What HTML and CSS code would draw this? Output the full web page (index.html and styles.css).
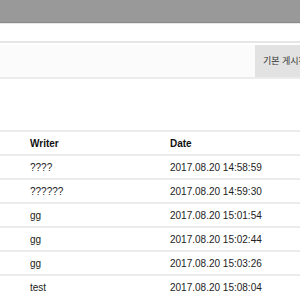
FILE: index.html
```html
<!DOCTYPE html>
<html lang="ko">
<head>
  <meta charset="UTF-8" />
  <title>게시판</title>
  <link rel="stylesheet" href="styles.css">
</head>
<body>
  <div class="topbar"></div>
  <div class="subbar"></div>

  <div class="search">
    <div class="search-input"></div>
    <div class="search-btn">기본 게시판</div>
  </div>

  <table class="board">
    <thead>
      <tr>
        <th class="col-writer">Writer</th>
        <th class="col-date">Date</th>
      </tr>
    </thead>
    <tbody>
      <tr><td>????</td><td>2017.08.20 14:58:59</td></tr>
      <tr><td>??????</td><td>2017.08.20 14:59:30</td></tr>
      <tr><td>gg</td><td>2017.08.20 15:01:54</td></tr>
      <tr><td>gg</td><td>2017.08.20 15:02:44</td></tr>
      <tr><td>gg</td><td>2017.08.20 15:03:26</td></tr>
      <tr><td>test</td><td>2017.08.20 15:08:04</td></tr>
    </tbody>
  </table>
</body>
</html>
```

FILE: styles.css
```css
body {
  margin: 0;
  font-family: "Liberation Sans", Arial, "Noto Sans CJK KR", sans-serif;
  background-color: #fff;
  color: #222;
  overflow: hidden;
}
.topbar {
  height: 22px;
  background-color: #999;
  border-bottom: 1px solid #8a8a8a;
}
.subbar {
  height: 17px;
  border-top: 1px solid #e8e8e8;
  border-bottom: 2px solid #e6e6e6;
  background-color: #fff;
}
.search {
  display: flex;
  height: 32px;
  margin-top: 2px;
  border-bottom: 2px solid #ececec;
  background-color: #fafafa;
}
.search-input {
  flex: 1;
  background-color: #fbfbfb;
}
.search-btn {
  box-sizing: border-box;
  width: 45px;
  flex-shrink: 0;
  padding-left: 8px;
  background-color: #e2e2e2;
  font-size: 9px;
  line-height: 32px;
  white-space: nowrap;
  overflow: hidden;
  color: #333;
}
.board {
  width: 100%;
  margin-top: 51px;
  border-collapse: collapse;
  font-size: 10px;
}
.board th,
.board td {
  height: 22px;
  padding: 0;
  text-align: left;
  border-top: 2px solid #ebebeb;
}
.board th {
  font-weight: bold;
  color: #111;
}
.col-writer {
  width: 140px;
  padding-left: 30px !important;
}
.board td:first-child {
  padding-left: 30px;
}
```
